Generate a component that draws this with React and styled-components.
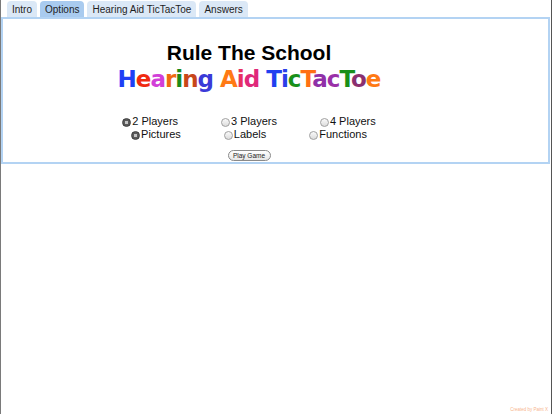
import React from "react";
import styled, { createGlobalStyle } from "styled-components";

const Global = createGlobalStyle`
  html, body { margin: 0; padding: 0; background: #fff; }
  body { font-family: "Liberation Sans", Arial, sans-serif; }
`;

const Page = styled.div`
  width: 552px;
  height: 414px;
  box-sizing: border-box;
  border-left: 1px solid #7a7a7a;
  border-right: 1px solid #555;
  display: flex;
  flex-direction: column;
  overflow: hidden;
`;

const TabBar = styled.div`
  display: flex;
  gap: 3px;
  padding-left: 6px;
  height: 16px;
  align-items: flex-end;
  margin-top: 1px;
`;

const Tab = styled.div`
  height: 16px;
  padding: 0 5px;
  border-radius: 4px 4px 0 0;
  background: ${(p) => (p.$active ? "#a9cbef" : "#dbe8f6")};
  color: #1e1e1e;
  font-size: 10px;
  line-height: 17px;
  white-space: nowrap;
`;

const Panel = styled.div`
  margin-right: 1px;
  border: 2px solid #b3d3f3;
  display: flex;
  flex-direction: column;
`;

const Content = styled.div`
  width: 492px;
  display: flex;
  flex-direction: column;
  align-items: center;
  padding: 21px 0 1px;
`;

const Title = styled.div`
  font-family: "Liberation Sans", Arial, sans-serif;
  font-weight: bold;
  font-size: 21px;
  line-height: 26px;
  color: #000;
`;

const Subtitle = styled.div`
  font-family: "DejaVu Sans", Verdana, sans-serif;
  font-weight: bold;
  font-size: 23px;
  letter-spacing: -1px;
  line-height: 26px;
  white-space: pre;
`;

const Letter = styled.span`
  color: ${(p) => p.$c};
`;

const Options = styled.div`
  margin-top: 23px;
  display: flex;
  flex-direction: column;
`;

const OptionRow = styled.div`
  display: flex;
  justify-content: center;
  gap: 43px;
  height: 13px;
`;

const Option = styled.label`
  display: flex;
  align-items: center;
  gap: 1px;
  font-size: 11px;
  line-height: 13px;
  color: #111;
  white-space: nowrap;
`;

const Radio = styled.span`
  width: 9px;
  height: 9px;
  box-sizing: border-box;
  border-radius: 50%;
  margin-top: 1px;
  flex: none;
  border: 1px solid ${(p) => (p.$checked ? "#3c3c3c" : "#a0a0a0")};
  background: ${(p) =>
    p.$checked
      ? "radial-gradient(circle, #c4c4c4 0 1.5px, #5a5a5a 2px)"
      : "linear-gradient(#fafafa, #dcdcdc)"};
`;

const PlayButton = styled.button`
  margin-top: 9px;
  width: 43px;
  height: 11px;
  padding: 0;
  border: 1px solid #8a8a8a;
  border-radius: 6px;
  background: linear-gradient(#ffffff, #e6e6e6);
  font-family: "Liberation Sans", Arial, sans-serif;
  font-size: 6.5px;
  line-height: 9px;
  color: #222;
`;

const Footer = styled.div`
  margin-top: auto;
  align-self: flex-end;
  padding: 0 3px 2px 0;
  font-size: 4.5px;
  line-height: 5px;
  color: #f7b58e;
`;

const word = [
  ["H", "#1f3ff5"],
  ["e", "#f02a10"],
  ["a", "#d23fd8"],
  ["r", "#f06a12"],
  ["i", "#1a8a1a"],
  ["n", "#c8461a"],
  ["g", "#3a3ad8"],
  [" ", "#000"],
  ["A", "#ff7a14"],
  ["i", "#e83060"],
  ["d", "#e0287a"],
  [" ", "#000"],
  ["T", "#2040f0"],
  ["i", "#2a40e8"],
  ["c", "#18901a"],
  ["T", "#ff7014"],
  ["a", "#9030a8"],
  ["c", "#9a30a8"],
  ["T", "#18901a"],
  ["o", "#8a3070"],
  ["e", "#ff7a14"],
];

const tabs = ["Intro", "Options", "Hearing Aid TicTacToe", "Answers"];

const rows = [
  [
    ["2 Players", true],
    ["3 Players", false],
    ["4 Players", false],
  ],
  [
    ["Pictures", true],
    ["Labels", false],
    ["Functions", false],
  ],
];

export default function App() {
  return (
    <>
      <Global />
      <Page>
        <TabBar>
          {tabs.map((t) => (
            <Tab key={t} $active={t === "Options"}>
              {t}
            </Tab>
          ))}
        </TabBar>
        <Panel>
          <Content>
            <Title>Rule The School</Title>
            <Subtitle>
              {word.map(([ch, c], i) => (
                <Letter key={i} $c={c}>
                  {ch}
                </Letter>
              ))}
            </Subtitle>
            <Options>
              {rows.map((row, ri) => (
                <OptionRow key={ri}>
                  {row.map(([label, checked]) => (
                    <Option key={label}>
                      <Radio $checked={checked} />
                      {label}
                    </Option>
                  ))}
                </OptionRow>
              ))}
            </Options>
            <PlayButton>Play Game</PlayButton>
          </Content>
        </Panel>
        <Footer>Created by Paint X</Footer>
      </Page>
    </>
  );
}
